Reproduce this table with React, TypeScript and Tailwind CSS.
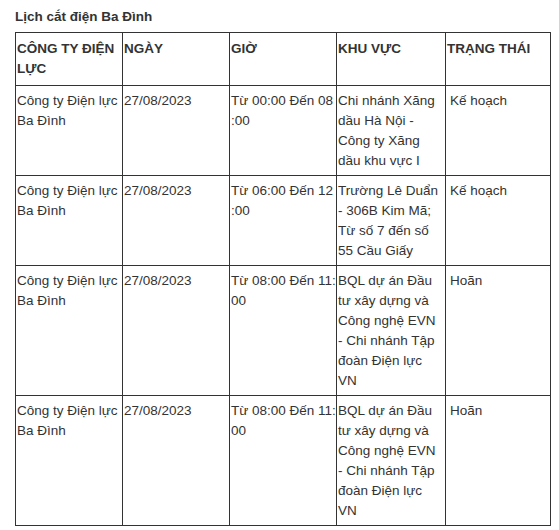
type Row = {
  company: string[];
  date: string;
  time: string[];
  area: string[];
  status: string;
};

const rows: Row[] = [
  {
    company: ["Công ty Điện lực", "Ba Đình"],
    date: "27/08/2023",
    time: ["Từ 00:00 Đến 08", ":00"],
    area: ["Chi nhánh Xăng", "dầu Hà Nội -", "Công ty Xăng", "dầu khu vực I"],
    status: "Kế hoạch",
  },
  {
    company: ["Công ty Điện lực", "Ba Đình"],
    date: "27/08/2023",
    time: ["Từ 06:00 Đến 12", ":00"],
    area: ["Trường Lê Duẩn", "- 306B Kim Mã;", "Từ số 7 đến số", "55 Cầu Giấy"],
    status: "Kế hoạch",
  },
  {
    company: ["Công ty Điện lực", "Ba Đình"],
    date: "27/08/2023",
    time: ["Từ 08:00 Đến 11:", "00"],
    area: ["BQL dự án Đầu", "tư xây dựng và", "Công nghệ EVN", "- Chi nhánh Tập", "đoàn Điện lực", "VN"],
    status: "Hoãn",
  },
  {
    company: ["Công ty Điện lực", "Ba Đình"],
    date: "27/08/2023",
    time: ["Từ 08:00 Đến 11:", "00"],
    area: ["BQL dự án Đầu", "tư xây dựng và", "Công nghệ EVN", "- Chi nhánh Tập", "đoàn Điện lực", "VN"],
    status: "Hoãn",
  },
];

function Lines({ lines }: { lines: string[] }) {
  return (
    <>
      {lines.map((l, i) => (
        <span key={i} className="block whitespace-nowrap">
          {l}
        </span>
      ))}
    </>
  );
}

const th = "border border-[#333] align-top text-left font-bold px-[1px] pt-[6px] pb-[6px]";
const td = "border border-[#333] align-top px-[1px] pt-[5px] pb-[4px]";

export default function App() {
  return (
    <div
      className="min-h-[530px] w-[559px] bg-white pl-[15px] text-[13.5px] leading-5 text-[#333]"
      style={{ fontFamily: '"Liberation Sans", Arial, sans-serif' }}
    >
      <h2 className="pt-[7px] mb-[5px] font-bold text-[13.5px] leading-5 text-[#333]">
        Lịch cắt điện Ba Đình
      </h2>
      <table className="table-fixed border-collapse w-[535px]">
        <colgroup>
          <col className="w-[107px]" />
          <col className="w-[107px]" />
          <col className="w-[107px]" />
          <col className="w-[109px]" />
          <col className="w-[105px]" />
        </colgroup>
        <thead>
          <tr>
            <th className={th}>
              <Lines lines={["CÔNG TY ĐIỆN", "LỰC"]} />
            </th>
            <th className={th}>NGÀY</th>
            <th className={th}>GIỜ</th>
            <th className={th}>KHU VỰC</th>
            <th className={th}>TRẠNG THÁI</th>
          </tr>
        </thead>
        <tbody>
          {rows.map((r, i) => (
            <tr key={i}>
              <td className={td}>
                <Lines lines={r.company} />
              </td>
              <td className={td}>{r.date}</td>
              <td className={td}>
                <Lines lines={r.time} />
              </td>
              <td className={td}>
                <Lines lines={r.area} />
              </td>
              <td className={`${td} pl-[4px]`}>{r.status}</td>
            </tr>
          ))}
        </tbody>
      </table>
    </div>
  );
}
